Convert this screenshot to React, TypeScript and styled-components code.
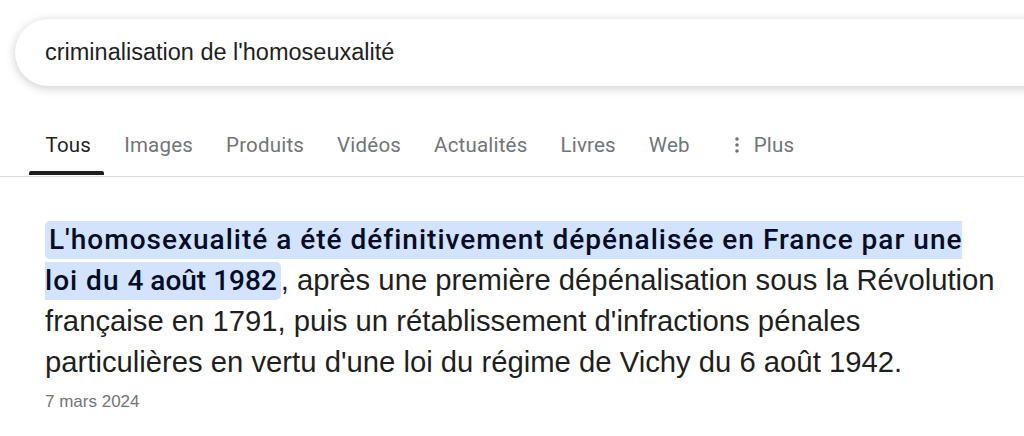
import React from "react";
import styled, { createGlobalStyle } from "styled-components";

const GlobalStyle = createGlobalStyle`
    html, body {
        margin: 0;
        padding: 0;
        background: #fff;
        overflow: hidden;
    }
    body {
        font-family: "Liberation Sans", Arial, sans-serif;
        color: #1f1f1f;
    }
`;

const Page = styled.div`
    width: 1024px;
    height: 436px;
    overflow: hidden;
`;

const SearchBox = styled.div`
    margin: 19px 0 0 15px;
    width: 1060px;
    height: 67px;
    border-radius: 34px;
    background: #fff;
    box-shadow: 0 2px 8px 1px rgba(64, 60, 67, 0.22);
    display: flex;
    align-items: center;
    padding-left: 30px;
    box-sizing: border-box;
    font-size: 23.5px;
    color: #1f1f1f;
`;

const Tabs = styled.nav`
    margin-top: 28px;
    display: flex;
    padding-left: 29px;
    border-bottom: 1px solid #dadce0;
`;

const Tab = styled.div<{ $active?: boolean; $more?: boolean }>`
    position: relative;
    display: flex;
    align-items: center;
    gap: 15px;
    height: 62px;
    padding: 0 16.5px;
    margin-left: ${p => (p.$more ? "12px" : "0")};
    font-family: Roboto, "Open Sans", sans-serif;
    font-size: 20.5px;
    letter-spacing: 0.2px;
    color: ${p => (p.$active ? "#1f1f1f" : "#70757a")};
    &::after {
        content: "";
        display: ${p => (p.$active ? "block" : "none")};
        position: absolute;
        left: 0;
        right: 4px;
        bottom: 1px;
        height: 4px;
        border-radius: 2px 2px 0 0;
        background: #1f1f1f;
    }
`;

const Result = styled.div`
    padding: 42px 0 0 45px;
`;

const Snippet = styled.p`
    margin: 0;
    width: 954px;
    font-size: 29.25px;
    line-height: 41px;
    color: #1f1f1f;
`;

const Highlight = styled.mark`
    background: #d3e3fd;
    color: #040c28;
    font-family: Roboto, sans-serif;
    font-size: 28px;
    font-weight: 500;
    letter-spacing: 1px;
    padding: 2px 4px 3px 4px;
    border-radius: 5px;
`;

const Figure = styled.span`
    letter-spacing: 0;
`;

const DateLine = styled.div`
    margin-top: 9px;
    font-size: 17px;
    color: #70757a;
`;

const MoreIcon = () => (
    <svg width="4" height="16" viewBox="0 0 4 16">
        <circle cx="2" cy="2" r="1.8" fill="#70757a" />
        <circle cx="2" cy="8" r="1.8" fill="#70757a" />
        <circle cx="2" cy="14" r="1.8" fill="#70757a" />
    </svg>
);

const tabs = ["Tous", "Images", "Produits", "Vidéos", "Actualités", "Livres", "Web"];

export default function App() {
    return (
        <Page>
            <GlobalStyle />
            <SearchBox>criminalisation de l'homoseuxalité</SearchBox>
            <Tabs>
                {tabs.map((t, i) => (
                    <Tab key={t} $active={i === 0}>
                        {t}
                    </Tab>
                ))}
                <Tab $more>
                    <MoreIcon />
                    Plus
                </Tab>
            </Tabs>
            <Result>
                <Snippet>
                    <Highlight>
                        L'homosexualité a été définitivement dépénalisée en France par une loi du{" "}
                        <Figure>4 août 1982</Figure>
                    </Highlight>
                    , après une première dépénalisation sous la Révolution française en 1791, puis un
                    rétablissement d'infractions pénales particulières en vertu d'une loi du régime de Vichy du 6
                    août 1942.
                </Snippet>
                <DateLine>7 mars 2024</DateLine>
            </Result>
        </Page>
    );
}
